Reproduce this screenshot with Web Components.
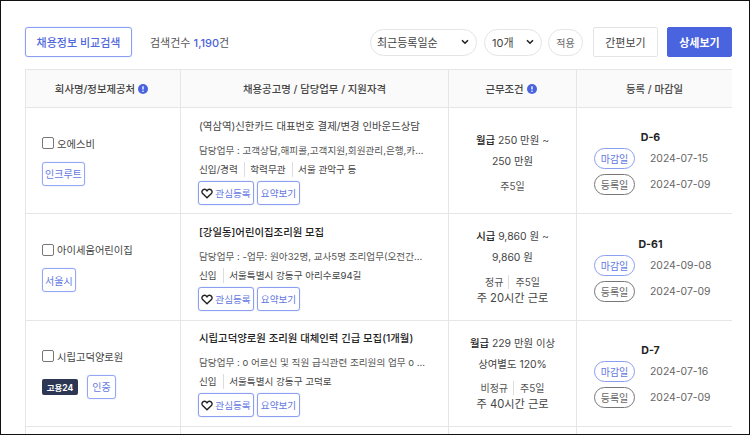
<!DOCTYPE html>
<html lang="ko">
<head>
<meta charset="utf-8">
<title>채용정보</title>
<style>
html,body{margin:0;padding:0;background:#fff}
body{font-family:Inter,"Noto Sans CJK KR",sans-serif;width:750px;height:435px;overflow:hidden}
</style>
</head>
<body>
<job-page>
  <search-bar slot="top" count="1,190"></search-bar>
  <table-head></table-head>
  <job-row name="오에스비" title="(역삼역)신한카드 대표번호 결제/변경 인바운드상담" duty="담당업무 : 고객상담,해피콜,고객지원,회원관리,은행,카..." meta="신입/경력|학력무관|서울 관악구 등" pay="월급|250 만원 ~|250 만원" terms="주5일" dday="D-6" end="2024-07-15" reg="2024-07-09" tags="인크루트"></job-row>
  <job-row strong name="아이세움어린이집" title="[강일동]어린이집조리원 모집" duty="담당업무 : -업무: 원아32명, 교사5명 조리업무(오전간..." meta="신입|서울특별시 강동구 아리수로94길" pay="시급|9,860 원 ~|9,860 원" terms="정규|주5일" hours="주 20시간 근로" dday="D-61" end="2024-09-08" reg="2024-07-09" tags="서울시"></job-row>
  <job-row strong gov name="시립고덕양로원" title="시립고덕양로원 조리원 대체인력 긴급 모집(1개월)" duty="담당업무 : o 어르신 및 직원 급식관련 조리원의 업무 o ..." meta="신입|서울특별시 강동구 고덕로" pay="월급|229 만원 이상|상여별도 120%" terms="비정규|주5일" hours="주 40시간 근로" dday="D-7" end="2024-07-16" reg="2024-07-09" tags="인증"></job-row>
  <job-row empty></job-row>
</job-page>

<script>
// 바깥 프레임
class JobPage extends HTMLElement {
  constructor() {
    super();
    this.attachShadow({mode: 'open'});
    this.shadowRoot.innerHTML = `<style>
      :host{display:block;box-sizing:border-box;width:750px;height:435px;border:1px solid #111;padding:26px 17px 0 24px;overflow:hidden;color:#333}
      .list{border-top:1px solid #e6e6e6;margin-top:12px}
    </style>
    <slot name="top"></slot>
    <div class="list"><slot></slot></div>`;
  }
}

class SearchBar extends HTMLElement {
  constructor() {
    super();
    this.attachShadow({mode: 'open'});
    var n = this.getAttribute('count');
    this.shadowRoot.innerHTML = `<style>
      :host{display:flex;align-items:center;height:30px;font-size:11px}
      .cmp{box-sizing:border-box;width:107px;height:30px;border:1px solid #8c9ef2;box-shadow:0 0 1px #8c9ef2;border-radius:3px;color:#5169dc;font-weight:500;display:flex;align-items:center;justify-content:center}
      .cnt{margin-left:18px;color:#555;flex:1;font-size:11px}
      .cnt b{color:#4a63d9;font-weight:500}
      .sel{box-sizing:border-box;height:27px;border:1px solid #e4e4e4;border-radius:14px;display:flex;align-items:center;justify-content:space-between;color:#444;padding:0 7px 0 6px;background:#fff}
      .sel svg{display:block}
      .s1{width:107px;margin-right:7px}
      .s2{width:58px;margin-right:6px;padding-left:7px}
      .ok{box-sizing:border-box;width:35px;height:27px;border:1px solid #e4e4e4;border-radius:14px;font-size:10px;color:#666;display:flex;align-items:center;justify-content:center;margin-right:10px}
      .btn{box-sizing:border-box;height:30px;width:65px;border:1px solid #e4e4e4;border-radius:2px;display:flex;align-items:center;justify-content:center;color:#444}
      .on{background:#4a63de;border-color:#4a63de;color:#fff;font-weight:700;margin-left:9px}
    </style>
    <div class="cmp">채용정보 비교검색</div>
    <div class="cnt">검색건수 <b>${n}</b>건</div>
    <div class="sel s1"><span>최근등록일순</span>${chev()}</div>
    <div class="sel s2"><span>10개</span>${chev()}</div>
    <div class="ok">적용</div>
    <div class="btn">간편보기</div>
    <div class="btn on">상세보기</div>`;
  }
}

function chev() {
  return '<svg width="8" height="6" viewBox="0 0 8 6"><path d="M1 1.2 4 4.2 7 1.2" fill="none" stroke="#222" stroke-width="1.6"/></svg>';
}

var GRID = 'display:grid;grid-template-columns:155px 268px 128px 156px;';

class InfoDot extends HTMLElement {
  constructor() {
    super();
    this.attachShadow({mode: 'open'});
    this.shadowRoot.innerHTML = `<style>:host{display:inline-flex;vertical-align:-1px;margin:0 3px 0 3px}</style>
    <svg width="10" height="10" viewBox="0 0 11 11"><circle cx="5.5" cy="5.5" r="5.5" fill="#4a63de"/><path d="M5.5 2.4v3.7" stroke="#fff" stroke-width="1.5"/><circle cx="5.5" cy="8" r=".9" fill="#fff"/></svg>`;
  }
}

class TableHead extends HTMLElement {
  constructor() {
    super();
    this.attachShadow({mode: 'open'});
    this.shadowRoot.innerHTML = `<style>
      :host{${GRID}height:37px;background:#fafafa;border-bottom:1px solid #e6e6e6;font-size:10.4px;font-weight:500;color:#444}
      div{display:flex;align-items:center;justify-content:center;border-left:1px solid #e6e6e6}
      div:first-child{border-left:0}
    </style>
    <div>회사명/정보제공처<info-dot></info-dot></div>
    <div>채용공고명 / 담당업무 / 지원자격</div>
    <div>근무조건<info-dot></info-dot></div>
    <div>등록 / 마감일</div>`;
  }
}

class JobRow extends HTMLElement {
  constructor() {
    super();
    this.attachShadow({mode: 'open'});
    var a = n => this.getAttribute(n) || '';
    var css = `<style>
      :host{${GRID}box-sizing:border-box;height:106px;border-bottom:1px solid #e6e6e6;font-size:9.6px;color:#444}
      :host([strong]){height:107px}
      :host([gov]){height:106px}
      :host([empty]){height:8px;border-bottom:0}
      .c{border-left:1px solid #e6e6e6;min-width:0}
      .c:first-child{border-left:0}
      .co{display:flex;flex-direction:column;justify-content:center;padding-left:16px;gap:11px}
      .chk{display:flex;align-items:center;gap:3px;font-size:10.3px}
      .box{box-sizing:border-box;width:12px;height:12px;border:1px solid #777;border-radius:2px;background:#fff}
      .tags{display:flex;align-items:center;gap:9px}
      .tag{box-sizing:border-box;height:24px;padding:0 2px;min-width:29px;border:1px solid #95a6f4;box-shadow:0 0 1px #95a6f4;border-radius:3px;color:#6478e2;font-size:10px;display:flex;align-items:center;justify-content:center}
      .gov{background:#2d3754;color:#fff;font-size:8.5px;font-weight:700;height:16px;width:36px;justify-content:center;border-radius:2px;display:flex;align-items:center}
      .job{padding:11px 0 0 18px;display:flex;flex-direction:column}
      :host([gov]) .job{padding-top:10px}
      .t{font-size:10.4px;line-height:16px;color:#444;white-space:nowrap}
      :host([strong]) .t{font-weight:500;color:#222}
      .d{margin-top:7.5px;line-height:15px;color:#555;white-space:nowrap}
      .m{margin-top:4px;line-height:15px;display:flex;color:#444}
      .m span+span{border-left:1px solid #ddd;margin-left:6px;padding-left:5.5px}
      .btns{display:flex;gap:3px;margin:4.5px 0 0 -1px}
      .b{box-sizing:border-box;height:24px;border:1px solid #8c9ef2;box-shadow:0 0 1px #8c9ef2;border-radius:3px;color:#6478e2;display:flex;align-items:center;justify-content:center}
      .b1{width:56px;gap:2px}.b2{width:43px}
      .cond{display:flex;flex-direction:column;align-items:center;justify-content:center;text-align:center;font-size:10.4px;padding-top:2px}
      :host([strong]) .cond{padding-top:0}
      .cond .p{line-height:21px}
      .cond b{font-weight:500;color:#222}
      .tm{display:flex;font-size:10px;color:#555;margin-top:6.5px;line-height:14px}
      .tm span+span{border-left:1px solid #ddd;margin-left:5px;padding-left:6px}
      .hr{font-size:11.2px;line-height:19px}
      .date{display:flex;flex-direction:column;align-items:center;justify-content:center;padding:7px 8px 0 0}
      .dd{font-weight:700;font-size:10.6px;color:#222;line-height:16px;margin-bottom:-.5px}
      .ln{display:grid;grid-template-columns:41px 15px 57px;align-items:center;height:26px;color:#666;font-size:10.4px}
      .pill{grid-column:1;box-sizing:border-box;height:21px;border:1px solid #8c9ef2;border-radius:11px;color:#6478e2;font-size:10px;display:flex;align-items:center;justify-content:center}
      .pill.g{border-color:#777;color:#666}
      .ln i{grid-column:3;font-style:normal;white-space:nowrap;text-align:center}
    </style>`;
    if (this.hasAttribute('empty')) {
      this.shadowRoot.innerHTML = css + '<div class="c"></div><div class="c"></div><div class="c"></div><div class="c"></div>';
      return;
    }
    var meta = a('meta').split('|').map(x => `<span>${x}</span>`).join('');
    var pay = a('pay').split('|');
    var terms = a('terms').split('|').map(x => `<span>${x}</span>`).join('');
    var gov = this.hasAttribute('gov') ? '<div class="gov">고용24</div>' : '';
    var hours = a('hours') ? `<div class="hr">${a('hours')}</div>` : '';
    this.shadowRoot.innerHTML = css + `
    <div class="c co">
      <div class="chk"><div class="box"></div><span>${a('name')}</span></div>
      <div class="tags">${gov}<div class="tag">${a('tags')}</div></div>
    </div>
    <div class="c job">
      <div class="t">${a('title')}</div>
      <div class="d">${a('duty')}</div>
      <div class="m">${meta}</div>
      <div class="btns">
        <div class="b b1"><svg width="12" height="11" viewBox="0 0 12 11"><path d="M6 9.8 1.6 5.6C.4 4.3.9 1.4 3.3 1.2 4.6 1.1 5.5 2 6 2.8 6.5 2 7.4 1.1 8.7 1.2c2.4.2 2.9 3.1 1.7 4.4Z" fill="none" stroke="#222" stroke-width="1.4"/></svg><span>관심등록</span></div>
        <div class="b b2">요약보기</div>
      </div>
    </div>
    <div class="c cond">
      <div class="p"><b>${pay[0]}</b> ${pay[1]}</div>
      <div class="p">${pay[2]}</div>
      <div class="tm">${terms}</div>
      ${hours}
    </div>
    <div class="c date">
      <div class="dd">${a('dday')}</div>
      <div class="ln"><div class="pill">마감일</div><i>${a('end')}</i></div>
      <div class="ln"><div class="pill g">등록일</div><i>${a('reg')}</i></div>
    </div>`;
  }
}

customElements.define('info-dot', InfoDot);
customElements.define('job-page', JobPage);
customElements.define('search-bar', SearchBar);
customElements.define('table-head', TableHead);
customElements.define('job-row', JobRow);
</script>
</body>
</html>
